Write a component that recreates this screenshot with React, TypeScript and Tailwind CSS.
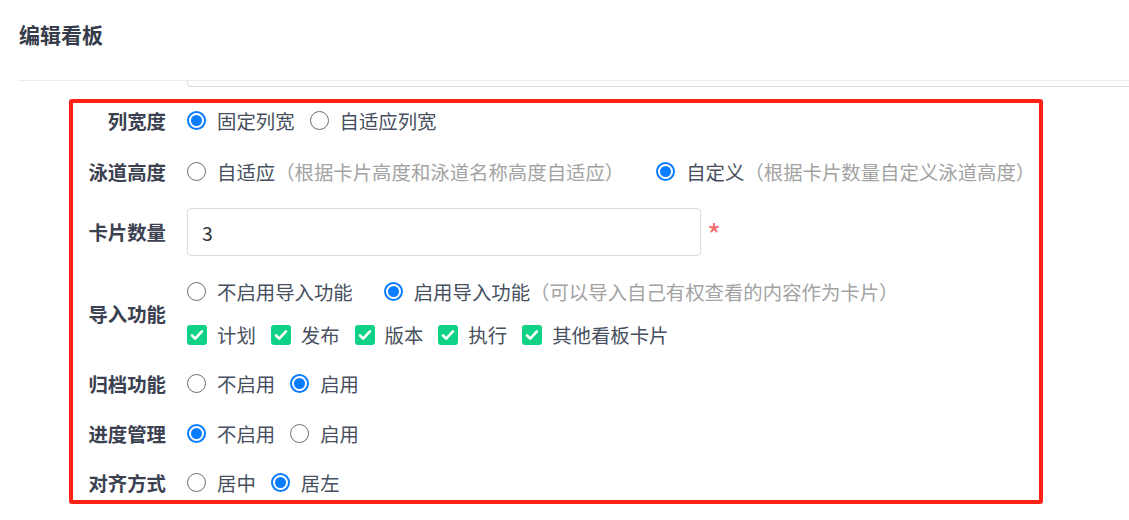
import React from "react";

const font = { fontFamily: '"Noto Sans CJK SC", "Noto Sans", sans-serif' };

function Radio({ checked, label, hint }: { checked?: boolean; label: string; hint?: string }) {
  return (
    <label className="flex items-center">
      {checked ? (
        <span className="flex h-[19px] w-[19px] items-center justify-center rounded-full border-2 border-[#0a7cff]">
          <span className="h-[11px] w-[11px] rounded-full bg-[#0a7cff]" />
        </span>
      ) : (
        <span className="h-[19px] w-[19px] rounded-full border-[1.5px] border-[#6e6e6e]" />
      )}
      <span className="ml-[11px] text-[#474f60]">{label}</span>
      {hint && <span className="text-[#a3a3a3]">（{hint}）</span>}
    </label>
  );
}

function Check({ label }: { label: string }) {
  return (
    <label className="flex items-center">
      <span className="flex h-[20px] w-[20px] items-center justify-center rounded-[3px] bg-[#10d286]">
        <svg viewBox="0 0 20 20" className="h-[18px] w-[18px]" fill="none">
          <path d="M4.5 10.5l3.5 3.5 7.5-8" stroke="white" strokeWidth="3" strokeLinecap="round" strokeLinejoin="round" />
        </svg>
      </span>
      <span className="ml-[10px] text-[#474f60]">{label}</span>
    </label>
  );
}

function Label({ text }: { text: string }) {
  return <div className="w-[93px] shrink-0 text-right font-bold text-[#3b4150]">{text}</div>;
}

export default function App() {
  return (
    <div className="min-h-[520px] bg-white text-[19.4px]" style={font}>
      <div className="ml-[18px] h-[81px] border-b border-[#ececec]">
        <h1 className="pl-[1px] pt-[19px] text-[21px] font-bold leading-[30px] text-[#353b48]">编辑看板</h1>
      </div>
      <div className="ml-[187px] h-[6px] rounded-bl-[4px] border-b border-l border-[#dcdcdc]" />

      <div className="ml-[69px] mt-[12px] h-[405px] w-[974px] rounded-[3px] border-4 border-[#ff2114]">
        <div className="flex h-[36px] items-center">
          <Label text="列宽度" />
          <div className="ml-[21px] flex items-center gap-[15px]">
            <Radio checked label="固定列宽" />
            <Radio label="自适应列宽" />
          </div>
        </div>

        <div className="mt-[15px] flex h-[36px] items-center">
          <Label text="泳道高度" />
          <div className="ml-[21px] flex items-center gap-[32px]">
            <Radio label="自适应" hint="根据卡片高度和泳道名称高度自适应" />
            <Radio checked label="自定义" hint="根据卡片数量自定义泳道高度" />
          </div>
        </div>

        <div className="mt-[18px] flex h-[48px] items-center">
          <Label text="卡片数量" />
          <div className="ml-[21px] flex items-center">
            <input
              readOnly
              value="3"
              className="h-[48px] w-[514px] rounded-[4px] border border-[#dcdcdc] pl-[14px] text-[#333] outline-none"
            />
            <span className="ml-[6px] mt-[4px] text-[30px] leading-none text-[#f56c6c]">*</span>
          </div>
        </div>

        <div className="mt-[18px] flex items-center">
          <Label text="导入功能" />
          <div className="ml-[21px]">
            <div className="flex h-[36px] items-center gap-[31px]">
              <Radio label="不启用导入功能" />
              <Radio checked label="启用导入功能" hint="可以导入自己有权查看的内容作为卡片" />
            </div>
            <div className="mt-[7px] flex h-[36px] items-center gap-[15px]">
              <Check label="计划" />
              <Check label="发布" />
              <Check label="版本" />
              <Check label="执行" />
              <Check label="其他看板卡片" />
            </div>
          </div>
        </div>

        <div className="mt-[13px] flex h-[36px] items-center">
          <Label text="归档功能" />
          <div className="ml-[21px] flex items-center gap-[15px]">
            <Radio label="不启用" />
            <Radio checked label="启用" />
          </div>
        </div>

        <div className="mt-[14px] flex h-[36px] items-center">
          <Label text="进度管理" />
          <div className="ml-[21px] flex items-center gap-[15px]">
            <Radio checked label="不启用" />
            <Radio label="启用" />
          </div>
        </div>

        <div className="mt-[14px] flex h-[34px] items-center">
          <Label text="对齐方式" />
          <div className="ml-[21px] flex items-center gap-[15px]">
            <Radio label="居中" />
            <Radio checked label="居左" />
          </div>
        </div>
      </div>
    </div>
  );
}
